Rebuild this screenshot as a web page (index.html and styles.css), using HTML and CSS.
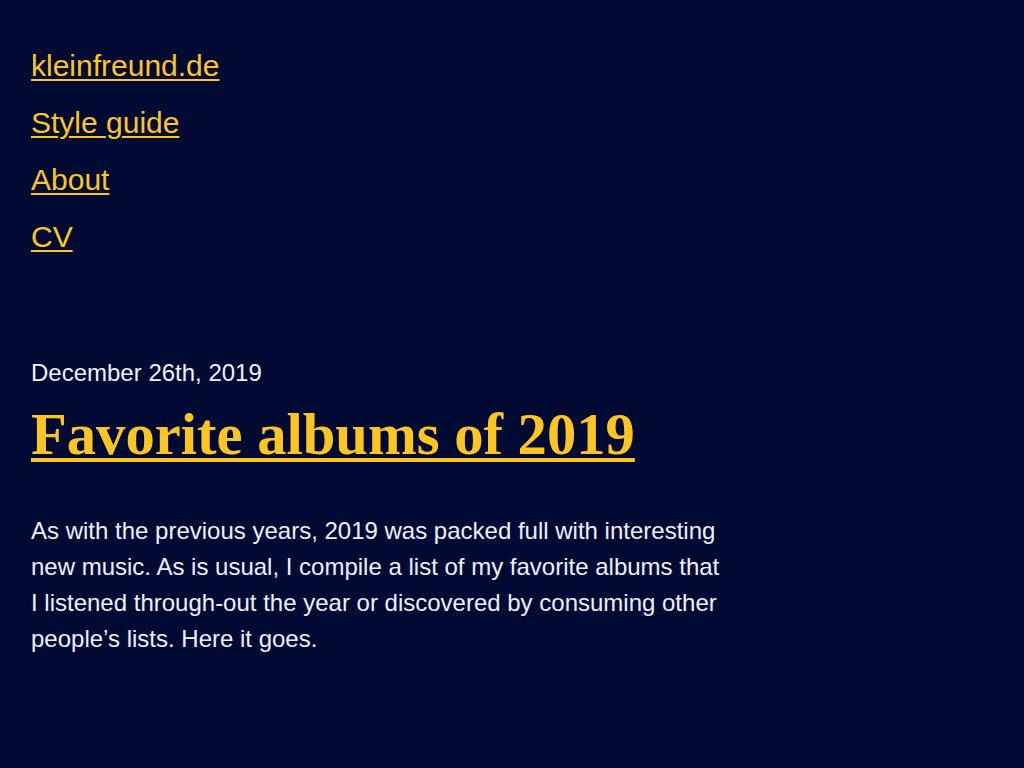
FILE: index.html
```html
<!DOCTYPE html>
<html lang="en">
<head>
<meta charset="utf-8">
<title>Favorite albums of 2019 – kleinfreund.de</title>
<link rel="stylesheet" href="styles.css">
</head>
<body>
<header class="site-header">
  <nav class="site-nav">
    <ul class="nav-list">
      <li class="nav-item"><a class="nav-link" href="#">kleinfreund.de</a></li>
      <li class="nav-item"><a class="nav-link" href="#">Style guide</a></li>
      <li class="nav-item"><a class="nav-link" href="#">About</a></li>
      <li class="nav-item"><a class="nav-link" href="#">CV</a></li>
    </ul>
  </nav>
</header>
<main class="content">
  <article class="post">
    <p class="post-date">December 26th, 2019</p>
    <h1 class="post-title"><a class="title-link" href="#">Favorite albums of 2019</a></h1>
    <p class="post-text">As with the previous years, 2019 was packed full with interesting new music. As is usual, I compile a list of my favorite albums that I listened through-out the year or discovered by consuming other people’s lists. Here it goes.</p>
  </article>
</main>
</body>
</html>
```

FILE: styles.css
```css
html {
  background: #000a33;
}

body {
  margin: 0;
  padding: 49px 31px 0;
  background: #000a33;
  color: #eef0ff;
  font-family: "Liberation Sans", Arial, sans-serif;
}

.nav-list {
  list-style: none;
  margin: 0;
  padding: 0;
  display: flex;
  flex-direction: column;
  gap: 23px;
  align-items: flex-start;
}

.nav-item {
  font-size: 30px;
  line-height: 34px;
}

.nav-link {
  color: #fcc521;
  text-decoration: underline;
  text-decoration-thickness: 2px;
  text-underline-offset: 3px;
}

.content {
  margin-top: 104px;
  max-width: 690px;
}

.post-date {
  margin: 0;
  font-size: 24px;
  line-height: 30px;
}

.post-title {
  margin: 11px 0 0;
  font-family: "Liberation Serif", "Times New Roman", serif;
  font-weight: 700;
  font-size: 58.6px;
  line-height: 72px;
}

.title-link {
  color: #fcc521;
  text-decoration: underline;
  text-decoration-thickness: 4px;
  text-underline-offset: 4px;
}

.post-text {
  margin: 42px 0 0;
  font-size: 24px;
  line-height: 36px;
}
```
